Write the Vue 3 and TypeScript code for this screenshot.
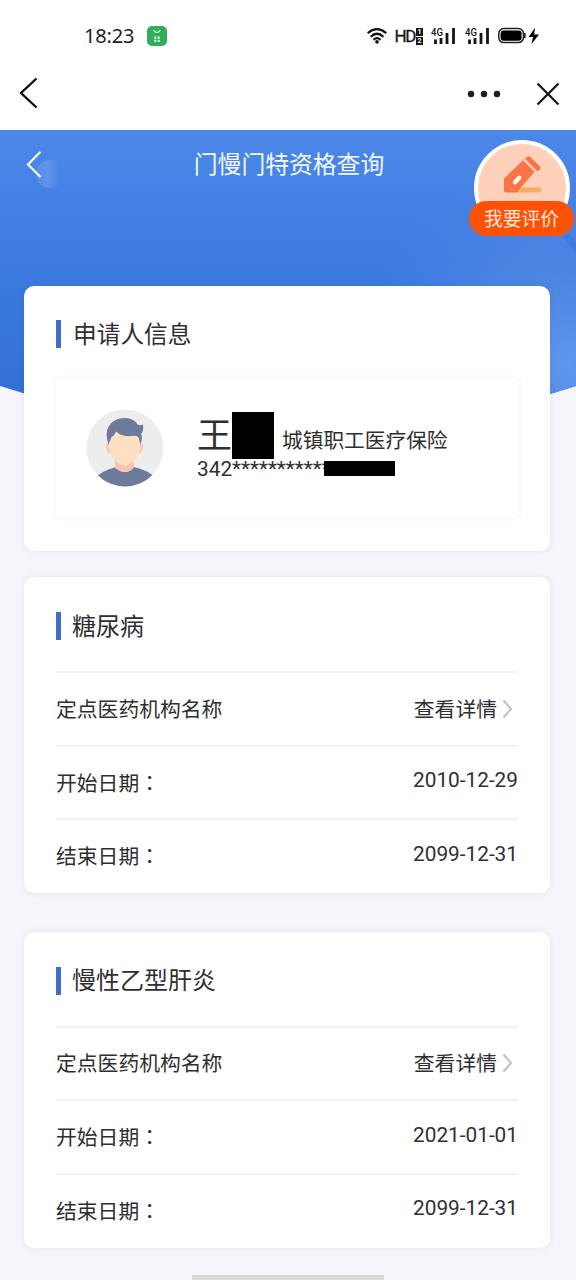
<script setup lang="ts">
interface Condition {
  name: string
  start: string
  end: string
}

const conditions: Condition[] = [
  { name: '糖尿病', start: '2010-12-29', end: '2099-12-31' },
  { name: '慢性乙型肝炎', start: '2021-01-01', end: '2099-12-31' },
]
const signals = [1, 2]
</script>

<template>
  <div class="screen">
    <header class="status">
      <div class="status-left">
        <span class="clock">18:23</span>
        <svg class="app-dot" width="20" height="20" viewBox="0 0 20 20">
          <rect width="20" height="20" rx="5" fill="#31ad5c" />
          <path d="M6.5 4.2Q10 8.8 13.5 4.2" fill="none" stroke="#d5f5df" stroke-width="1.2" />
          <path d="M7.2 10.5h2.2v2.2H7.2zM10.6 10.5h2.2v2.2h-2.2zM7.2 13.7h2.2v2.2H7.2zM10.6 13.7h2.2v2.2h-2.2z" fill="#d5f5df" />
        </svg>
      </div>
      <div class="status-right">
        <svg class="wifi" width="20" height="16" viewBox="0 0 20 16">
          <g fill="none" stroke="#151515" stroke-width="2.2">
            <path d="M.7 5.1Q10-3 19.3 5.1" />
            <path d="M3.6 8.7Q10 2.8 16.4 8.7" />
            <path d="M6.5 11.9Q10 8.5 13.5 11.9" />
          </g>
          <circle cx="10" cy="13.9" r="1.8" fill="#151515" />
        </svg>
        <span class="hd">HD</span>
        <span class="sims"><b>1</b><b>2</b></span>
        <svg v-for="s in signals" :key="s" class="signal" width="25" height="18" viewBox="0 0 25 18">
          <text x="0" y="9" class="net" textLength="12" lengthAdjust="spacingAndGlyphs">4G</text>
          <path d="M4.5 12.5V17M10 11V17M16 6V17M22.5 1V17" stroke="#151515" stroke-width="2.8" />
        </svg>
        <svg class="battery" width="42" height="18" viewBox="0 0 42 18">
          <rect x=".8" y="1.6" width="24.6" height="14" rx="5" fill="none" stroke="#222" stroke-width="1.5" />
          <rect x="2.6" y="3.4" width="21" height="10.4" rx="3" fill="#000" />
          <path d="M26.8 6v5.2" stroke="#222" stroke-width="1.7" />
          <path d="M37 .8L30.6 10H35L33.4 17.3L41 7.6H36.2Z" fill="#000" />
        </svg>
      </div>
    </header>

    <nav class="navbar">
      <svg width="20" height="32" viewBox="0 0 20 32">
        <path d="M17.5 1.5L2 16L17.5 30.5" fill="none" stroke="#080808" stroke-width="2.3" />
      </svg>
      <div class="nav-actions">
        <svg width="34" height="8" viewBox="0 0 34 8" fill="#1d1d1f">
          <circle cx="4" cy="4" r="3.2" /><circle cx="17" cy="4" r="3.2" /><circle cx="30" cy="4" r="3.2" />
        </svg>
        <svg width="24" height="24" viewBox="0 0 24 24">
          <path d="M1.5 1.5L22.5 22.5M22.5 1.5L1.5 22.5" stroke="#18181a" stroke-width="2.3" />
        </svg>
      </div>
    </nav>

    <main class="page">
      <svg class="backdrop" width="576" height="310" viewBox="0 0 576 310">
        <defs>
          <linearGradient id="sky" x1="0" y1="0" x2="0" y2="1">
            <stop offset="0" stop-color="#4b88e9" />
            <stop offset=".58" stop-color="#3877dc" />
            <stop offset="1" stop-color="#2f6dd2" />
          </linearGradient>
          <radialGradient id="glow" gradientUnits="userSpaceOnUse" cx="565" cy="235" r="220">
            <stop offset="0" stop-color="#6096ed" />
            <stop offset=".4" stop-color="#528ae6" stop-opacity=".75" />
            <stop offset="1" stop-color="#4a84e4" stop-opacity="0" />
          </radialGradient>
          <linearGradient id="bubble" x1="0" y1="0" x2="1" y2="0">
            <stop offset="0" stop-color="#78a6ef" stop-opacity=".3" />
            <stop offset=".4" stop-color="#78a6ef" stop-opacity=".5" />
            <stop offset=".85" stop-color="#78a6ef" stop-opacity="0" />
          </linearGradient>
        </defs>
        <path d="M0 0H576V256Q288 350 0 256Z" fill="url(#sky)" />
        <path d="M330 0H576V256Q450 298 330 303Z" fill="url(#glow)" />
        <path d="M562 106L576 123V112L570 104Z" fill="#3f7bdd" />
        <circle cx="50" cy="44" r="14" fill="url(#bubble)" />
      </svg>

      <div class="page-head">
        <svg class="page-back" width="18" height="28" viewBox="0 0 18 28">
          <path d="M15.5 1.8L3 14.5L15.5 27" fill="none" stroke="#f4f9ff" stroke-width="2.2" />
        </svg>
        <h1>门慢门特资格查询</h1>
      </div>

      <div class="rate">
        <svg class="rate-disc" width="96" height="96" viewBox="0 0 96 96">
          <circle cx="48" cy="48" r="46" fill="#ffd1bb" stroke="#fff" stroke-width="4" />
          <path d="M40 47.5H67V52.5H40Z" fill="#f9ae5e" />
          <path d="M30.5 38.2L49 20.2L60.5 31.7L44.5 50.5L43 52.5H32Q30 52.5 30 50.5V39.5Z" fill="#fa7447" />
          <path d="M51 18.8L53.6 16.6Q55 15.8 56.6 17.2L66 26.6Q67 28 66 29.4L63.5 31.6Z" fill="#fa7447" />
          <path d="M41 42.3L45.3 37.8" stroke="#fff3ec" stroke-width="4.4" stroke-linecap="round" />
        </svg>
        <span class="rate-label">我要评价</span>
      </div>

      <section class="card applicant">
        <h2><i></i><span>申请人信息</span></h2>
        <div class="person">
          <svg class="avatar" width="78" height="78" viewBox="0 0 78 78">
            <defs><clipPath id="disc"><circle cx="39" cy="39" r="38.5" /></clipPath></defs>
            <g clip-path="url(#disc)">
              <rect width="78" height="78" fill="#ededee" />
              <path d="M8 70Q17 61 30 58Q39 68 48 58Q62 61 71 70V78H8Z" fill="#6b7b99" />
              <path d="M29 50H48V59Q39 67 29 59Z" fill="#fcc3ae" />
              <path d="M22 34Q18 35 21 42Q22 45 25 45ZM55 34Q59 35 56 42Q55 45 52 45Z" fill="#fcc9ae" />
              <path d="M24 24H54V41Q53 48 47 53Q39 60 31 53Q25 48 24 41Z" fill="#ffdfc1" />
              <path d="M22.5 36Q18.5 23 23 17Q28 9 39 9Q48 9 51.5 15.5Q54 17 57 15.5Q58 22 55 25Q57 28 54.5 36L52.5 28Q49 26 45 27Q36 28 30 22.5Q28 27 25.5 28Z" fill="#6b7b99" />
            </g>
          </svg>
          <div class="identity">
            <div class="name-line">
              <span class="surname">王</span><span class="mask-name"></span><span class="plan">城镇职工医疗保险</span>
            </div>
            <div class="id-line"><span class="id-no">342***********</span><span class="mask-id"></span></div>
          </div>
        </div>
      </section>

      <section v-for="c in conditions" :key="c.name" class="card condition">
        <h2><i></i><span>{{ c.name }}</span></h2>
        <div class="row">
          <span class="label">定点医药机构名称</span>
          <span class="link"><span class="label">查看详情</span>
            <svg width="11" height="20" viewBox="0 0 11 20">
              <path d="M1.5 1.5L9 10L1.5 18.5" fill="none" stroke="#c4c4c6" stroke-width="2.2" />
            </svg>
          </span>
        </div>
        <div class="row"><span>开始日期<em>：</em></span><span class="date">{{ c.start }}</span></div>
        <div class="row"><span>结束日期<em>：</em></span><span class="date">{{ c.end }}</span></div>
      </section>
      <div class="home-bar"></div>
    </main>
  </div>
</template>

<style>
body {
  background: #f4f6fb;
}
</style>

<style scoped>
* {
  box-sizing: border-box;
}
.screen {
  width: 576px;
  height: 1280px;
  overflow: hidden;
  font-family: Roboto, "Noto Sans CJK SC", sans-serif;
  color: #2f2f32;
  background: #f4f6fb;
}
.status {
  height: 72px;
  background: #fff;
  display: flex;
  justify-content: space-between;
  padding: 26px 36px 0 84px;
}
.status-left {
  display: flex;
  height: 20px;
  align-items: center;
  gap: 13px;
}
.clock {
  font: 20px/20px "Noto Sans", sans-serif;
  letter-spacing: -0.2px;
  color: #222;
}
.status-right {
  display: flex;
  height: 20px;
  align-items: center;
}
.hd {
  font: 17px/20px Roboto, sans-serif;
  letter-spacing: -1.4px;
  color: #151515;
  margin-left: 8px;
  -webkit-text-stroke: 0.3px #151515;
}
.sims {
  display: flex;
  flex-direction: column;
  gap: 1px;
  margin: 0 8px 0 1px;
}
.sims b {
  width: 7px;
  height: 8px;
  background: #151515;
  color: #fff;
  font: bold 7px/8px Roboto, sans-serif;
  text-align: center;
}
.signal {
  margin-right: 9px;
}
.net {
  font: 500 11px Roboto, sans-serif;
  fill: #151515;
}
.battery {
  margin-left: -1px;
}
.navbar {
  height: 58px;
  background: #fff;
  display: flex;
  justify-content: space-between;
  padding: 5px 16px 0 19px;
}
.nav-actions {
  display: flex;
  align-items: center;
  gap: 35px;
  height: 33px;
}
.page {
  position: relative;
  height: 1150px;
  padding: 0 26px 0 24px;
}
.backdrop {
  position: absolute;
  left: 0;
  top: 0;
}
.page-head {
  position: relative;
  height: 156px;
  padding-top: 21px;
}
.page-back {
  position: absolute;
  left: 1px;
  top: 20px;
}
h1 {
  margin: 0 0 0 4px;
  text-align: center;
  font-size: 23.8px;
  line-height: 28px;
  font-weight: 400;
  color: #f3f9ff;
}
.rate {
  position: absolute;
  left: 469px;
  top: 10px;
  width: 105px;
  display: flex;
  flex-direction: column;
  align-items: center;
}
.rate-label {
  position: relative;
  width: 105px;
  height: 35px;
  margin-top: -35px;
  padding-top: 2px;
  border-radius: 18px;
  background: #fd5206;
  color: #ffe9dc;
  font-size: 18.8px;
  line-height: 34px;
  text-align: center;
}
.card {
  position: relative;
  background: #fff;
  border-radius: 10px;
  box-shadow: 0 0 7px rgba(60, 65, 80, 0.09);
  padding: 0 32px;
}
h2 {
  display: flex;
  align-items: center;
  margin: 0;
  height: 28px;
  font-size: 24px;
  line-height: 28px;
  font-weight: 400;
}
h2 i {
  width: 5px;
  height: 28px;
  background: #426dc6;
  margin-right: 11px;
}
.applicant {
  height: 265px;
  padding-top: 34px;
  margin-bottom: 26px;
}
.applicant h2 {
  font-size: 23.7px;
}
.applicant h2 span {
  padding-top: 2px;
}
.applicant h2 i {
  margin-right: 12px;
}
.person {
  display: flex;
  height: 140px;
  margin: 30px -1px 0 0;
  padding: 31px 0 0 30px;
  border-radius: 6px;
  box-shadow: 0 0 6px rgba(0, 0, 0, 0.06);
}
.identity {
  margin-left: 33px;
  padding-top: 3px;
}
.name-line {
  display: flex;
  height: 47px;
}
.surname {
  width: 35px;
  font-size: 35px;
  line-height: 49px;
}
.mask-name {
  width: 42px;
  height: 47px;
  background: #000;
}
.plan {
  margin-left: 8px;
  font-size: 20.7px;
  line-height: 58px;
  white-space: nowrap;
}
.id-line {
  display: flex;
  height: 20px;
  font-size: 20.8px;
  line-height: 20px;
}
.id-no {
  width: 127px;
  white-space: nowrap;
}
.mask-id {
  position: relative;
  width: 71px;
  height: 15px;
  margin-top: 2px;
  background: #000;
}
.condition {
  height: 316px;
  padding-top: 35px;
  margin-bottom: 38.5px;
}
.condition h2 {
  height: 28px;
  margin-bottom: 31px;
}
.condition h2 span {
  padding-top: 1px;
}
.row {
  display: flex;
  justify-content: space-between;
  align-items: center;
  height: 73.7px;
  border-top: 2px solid #f1f2f3;
  font-size: 20.8px;
  line-height: 30px;
}
.label {
  padding-top: 2px;
}
.row em {
  font-style: normal;
  font-family: "Noto Sans CJK TC", sans-serif;
}
.link {
  display: flex;
  align-items: center;
  gap: 5px;
  margin-right: 5px;
}
.date {
  margin-bottom: 5px;
}
.home-bar {
  position: absolute;
  left: 192px;
  bottom: 0;
  width: 192px;
  height: 5px;
  background: #d9dadc;
}
</style>
